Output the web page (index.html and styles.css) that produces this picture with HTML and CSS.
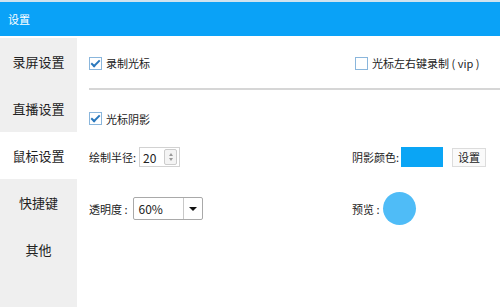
FILE: index.html
```html
<!doctype html>
<html>
<head>
<meta charset="utf-8">
<link rel="stylesheet" href="styles.css">
</head>
<body>
<div class="win">
  <div class="title">设置</div>
  <div class="main">
    <ul class="side">
      <li>录屏设置</li>
      <li>直播设置</li>
      <li class="on">鼠标设置</li>
      <li>快捷键</li>
      <li>其他</li>
    </ul>
    <div class="pane">
      <div class="row r1">
        <label class="chk"><span class="box checked"></span>录制光标</label>
        <label class="chk right"><span class="box"></span>光标左右键录制 ( vip )</label>
      </div>
      <div class="sep"></div>
      <div class="row r2">
        <label class="chk"><span class="box checked"></span>光标阴影</label>
      </div>
      <div class="row r3">
        <div class="field"><span>绘制半径:</span><span class="spin"><span class="val">20</span><span class="arrows"><i class="up"></i><i class="down"></i></span></span></div>
        <div class="field"><span>阴影颜色:</span><span class="swatch"></span><span class="btn">设置</span></div>
      </div>
      <div class="row r4">
        <div class="field"><span>透明度 :</span><span class="combo"><span class="val">60%</span><span class="drop"><i></i></span></span></div>
        <div class="field"><span>预览 :</span><span class="dot"></span></div>
      </div>
    </div>
  </div>
</div>
</body>
</html>
```
FILE: styles.css
```css
body{margin:0; background:#fff; font:11px "Noto Sans CJK SC", "Microsoft YaHei", sans-serif; color:#222}
.win{width:500px; height:307px; display:flex; flex-direction:column}
.title{height:34px; border-top:2px solid #cfe3ef; background:#0aa2f7; color:#fff; line-height:34px; padding-left:8px; font-size:11px}
.main{flex:1; display:flex; padding-top:2px}
.side{list-style:none; margin:0; padding:0; width:77px; background:#efefef; font-size:13px; color:#222}
.side li{height:47px; line-height:47px; text-align:center}
.side li.on{background:#fff}
.pane{flex:1; padding-left:12px}
.row{display:grid; grid-template-columns:263px auto; align-items:center}
.r1{height:50px}
.sep{height:2px; background:#d6d6d6}
.r2{height:57px}
.r3{height:20px}
.r4{height:22px; margin-top:25px}
.chk{display:flex; align-items:center; gap:4px}
.chk.right{margin-left:3px}
.box{width:11px; height:11px; border:1px solid #8ab6dc; background:#fff; position:relative}
.box.checked::after{content:""; position:absolute; left:3px; top:0; width:3px; height:7px; border:solid #2a78bd; border-width:0 2px 2px 0; transform:rotate(45deg)}
.field{display:flex; align-items:center}
.spin{display:flex; align-items:center; height:18px; width:39px; border:1px solid #d2d2d2; margin-left:3px}
.spin .val{flex:1; padding-left:3px; font-size:12px}
.arrows{width:11px; height:14px; margin-right:2px; border:1px solid #ccc; border-radius:2px; display:flex; flex-direction:column; align-items:center; justify-content:center; gap:2px; background:#f4f4f4}
.arrows i{width:0; height:0; border-left:2px solid transparent; border-right:2px solid transparent}
.arrows .up{border-bottom:3px solid #9a9a9a}
.arrows .down{border-top:3px solid #9a9a9a}
.swatch{width:42px; height:20px; background:#0aa5f5; margin-left:2px}
.btn{margin-left:9px; width:32px; height:17px; line-height:17px; text-align:center; border:1px solid #dcdcdc; background:#fafafa}
.combo{display:flex; height:21px; width:68px; border:1px solid #a9a9a9; border-radius:2px; margin-left:5px; align-items:center}
.combo .val{flex:1; padding-left:5px; font-size:12px}
.drop{width:18px; height:21px; border-left:1px solid #c8c8c8; display:flex; align-items:center; justify-content:center}
.drop i{width:0; height:0; border-left:4px solid transparent; border-right:4px solid transparent; border-top:4px solid #111}
.dot{width:33px; height:33px; border-radius:50%; background:#4fbcf7; margin-left:3px}
```
